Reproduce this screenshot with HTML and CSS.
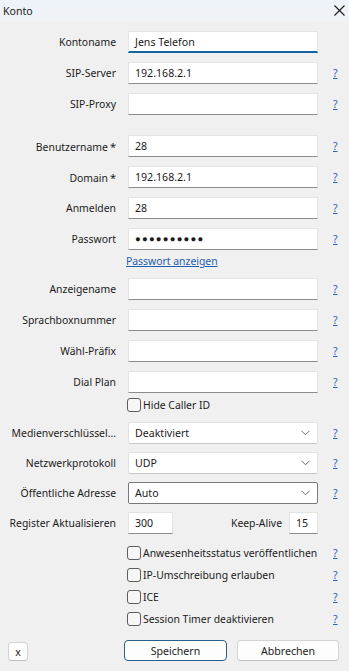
FILE: index.html
```html
<!DOCTYPE html>
<html lang="de">
<head>
  <meta charset="UTF-8" />
  <meta name="viewport" content="width=device-width, initial-scale=1.0"/>
  <title>Konto</title>
  <link rel="stylesheet" href="styles.css">
</head>
<body>
  <div class="window">
    <header class="titlebar">
      <span>Konto</span>
      <svg class="close" width="11" height="11" viewBox="0 0 11 11"><path d="M0.5 0.5 L10.5 10.5 M10.5 0.5 L0.5 10.5" stroke="#1a1a1a" stroke-width="1.1" fill="none"/></svg>
    </header>

    <div class="form">
      <div class="row">
        <label>Kontoname</label>
        <div class="field focused">Jens Telefon</div>
        <span></span>
      </div>
      <div class="row">
        <label>SIP-Server</label>
        <div class="field">192.168.2.1</div>
        <a class="help" href="#">?</a>
      </div>
      <div class="row">
        <label>SIP-Proxy</label>
        <div class="field"></div>
        <a class="help" href="#">?</a>
      </div>

      <div class="row group">
        <label>Benutzername<span class="req">*</span></label>
        <div class="field">28</div>
        <a class="help" href="#">?</a>
      </div>
      <div class="row">
        <label>Domain<span class="req">*</span></label>
        <div class="field">192.168.2.1</div>
        <a class="help" href="#">?</a>
      </div>
      <div class="row">
        <label>Anmelden</label>
        <div class="field">28</div>
        <a class="help" href="#">?</a>
      </div>
      <div class="row">
        <label>Passwort</label>
        <div class="field dots">●●●●●●●●●●</div>
        <a class="help" href="#">?</a>
      </div>
      <div class="row link-row">
        <span></span>
        <a class="show-pass" href="#">Passwort anzeigen</a>
        <span></span>
      </div>

      <div class="row">
        <label>Anzeigename</label>
        <div class="field"></div>
        <a class="help" href="#">?</a>
      </div>
      <div class="row">
        <label>Sprachboxnummer</label>
        <div class="field"></div>
        <a class="help" href="#">?</a>
      </div>
      <div class="row">
        <label>Wähl-Präfix</label>
        <div class="field"></div>
        <a class="help" href="#">?</a>
      </div>
      <div class="row">
        <label>Dial Plan</label>
        <div class="field"></div>
        <a class="help" href="#">?</a>
      </div>
      <div class="row check-row hide-id">
        <span></span>
        <div class="check"><span class="box"></span>Hide Caller ID</div>
        <span></span>
      </div>

      <div class="row select-row">
        <label>Medienverschlüssel...</label>
        <div class="select">Deaktiviert<svg width="9" height="6" viewBox="0 0 9 6"><path d="M0.5 0.8 L4.5 4.8 L8.5 0.8" stroke="#6e6e6e" fill="none"/></svg></div>
        <a class="help" href="#">?</a>
      </div>
      <div class="row select-row">
        <label>Netzwerkprotokoll</label>
        <div class="select">UDP<svg width="9" height="6" viewBox="0 0 9 6"><path d="M0.5 0.8 L4.5 4.8 L8.5 0.8" stroke="#6e6e6e" fill="none"/></svg></div>
        <a class="help" href="#">?</a>
      </div>
      <div class="row select-row">
        <label>Öffentliche Adresse</label>
        <div class="select active">Auto<svg width="9" height="6" viewBox="0 0 9 6"><path d="M0.5 0.8 L4.5 4.8 L8.5 0.8" stroke="#6e6e6e" fill="none"/></svg></div>
        <a class="help" href="#">?</a>
      </div>

      <div class="row register">
        <label>Register Aktualisieren</label>
        <div class="reg-fields">
          <div class="field small">300</div>
          <span class="keep">Keep-Alive</span>
          <div class="field tiny">15</div>
        </div>
        <span></span>
      </div>

      <div class="checks">
        <div class="row check-row">
          <span></span>
          <div class="check"><span class="box"></span>Anwesenheitsstatus veröffentlichen</div>
          <a class="help" href="#">?</a>
        </div>
        <div class="row check-row">
          <span></span>
          <div class="check"><span class="box"></span>IP-Umschreibung erlauben</div>
          <a class="help" href="#">?</a>
        </div>
        <div class="row check-row">
          <span></span>
          <div class="check"><span class="box"></span>ICE</div>
          <a class="help" href="#">?</a>
        </div>
        <div class="row check-row">
          <span></span>
          <div class="check"><span class="box"></span>Session Timer deaktivieren</div>
          <a class="help" href="#">?</a>
        </div>
      </div>

      <div class="buttons">
        <button class="btn x">x</button>
        <div class="actions">
          <button class="btn primary">Speichern</button>
          <button class="btn">Abbrechen</button>
        </div>
      </div>
    </div>
  </div>
</body>
</html>
```

FILE: styles.css
```css
* {
  box-sizing: border-box;
}
body {
  margin: 0;
  background: #f0f0f0;
  font-family: 'Noto Sans', 'Open Sans', sans-serif;
  font-size: 10.4px;
  color: #1b1b1b;
}
.window {
  width: 349px;
  height: 671px;
  background: #f0f0f0;
}
.titlebar {
  height: 22px;
  display: flex;
  align-items: center;
  justify-content: space-between;
  padding: 0 4px 0 3px;
  background: linear-gradient(to bottom, #eef3f9, #f0f2f5);
  font-size: 10.6px;
}
.titlebar .close {
  margin-top: -2px;
}

.form {
  padding-top: 9px;
}
.row {
  display: grid;
  grid-template-columns: 116px 190px 1fr;
  column-gap: 12px;
  align-items: center;
  height: 22px;
  margin-bottom: 9px;
}
.row label {
  text-align: right;
  white-space: nowrap;
}
.row.group {
  margin-top: 20px;
}
.req {
  margin-left: 2px;
  font-size: 11px;
}
.field {
  height: 22px;
  background: #fff;
  border: 1px solid #e4e4e4;
  border-bottom-color: #8c8c8c;
  padding: 0 6px;
  line-height: 20px;
  font-size: 10.6px;
  white-space: nowrap;
}
.field.focused {
  border-bottom: 2px solid #1264a3;
}
.field.dots {
  font-size: 9.5px;
  letter-spacing: 1.2px;
  line-height: 20px;
}
.help {
  color: #2a64b0;
  font-size: 10.5px;
  margin-left: 3px;
  text-decoration: underline;
}

.link-row {
  height: 16px;
  margin-top: -6px;
}
.show-pass {
  color: #1d5fae;
  text-decoration: underline;
  margin-left: -2px;
}

.check-row {
  margin-bottom: 0;
}
.hide-id {
  margin-top: -8px;
  margin-bottom: 6px;
}
.check {
  display: flex;
  align-items: center;
  white-space: nowrap;
  margin-left: -1px;
}
.box {
  flex-shrink: 0;
  width: 14px;
  height: 14px;
  border: 1px solid #5d5d5d;
  border-radius: 3px;
  background: #f6f6f6;
  margin-right: 2px;
}

.select-row {
  margin-bottom: 8px;
}
.select {
  height: 22px;
  background: #fff;
  border: 1px solid #e2e2e2;
  border-bottom-color: #c8c8c8;
  border-radius: 2px;
  padding: 0 6px 0 6px;
  display: flex;
  align-items: center;
  justify-content: space-between;
  font-size: 10.6px;
}
.select svg {
  margin-right: 1px;
}
.select.active {
  border: 1px solid #7a7a7a;
}

.register {
  margin-top: 1px;
  margin-bottom: 8px;
}
.reg-fields {
  display: flex;
  align-items: center;
}
.field.small {
  width: 45px;
}
.field.tiny {
  width: 29px;
}
.keep {
  flex: 1;
  text-align: right;
  padding-right: 7px;
}

.checks {
  margin-bottom: 10px;
}

.buttons {
  display: flex;
  justify-content: space-between;
  align-items: flex-end;
  padding: 0 10px 0 8px;
}
.actions {
  display: flex;
  gap: 10px;
}
.btn {
  font-family: 'Noto Sans', 'Open Sans', sans-serif;
  font-size: 10.6px;
  color: #1b1b1b;
  background: #fdfdfd;
  border: 1px solid #d3d3d3;
  border-bottom-color: #bdbdbd;
  border-radius: 4px;
  height: 21px;
  width: 102px;
  padding: 0;
}
.btn.primary {
  border: 1px solid #2c5f86;
  width: 103px;
}
.btn.x {
  width: 20px;
  height: 19px;
  font-size: 10.5px;
}
```
